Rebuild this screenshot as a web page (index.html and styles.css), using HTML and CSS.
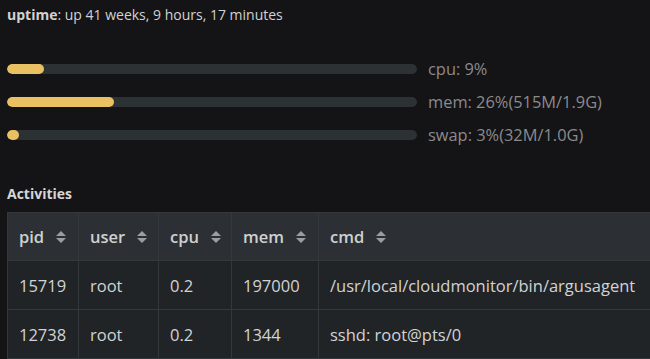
FILE: index.html
```html
<!DOCTYPE html>
<html>
<head>
<meta charset="utf-8">
<link rel="stylesheet" href="styles.css">
</head>
<body>
<div class="page">
  <div class="uptime"><b>uptime</b>: up 41 weeks, 9 hours, 17 minutes</div>
  <div class="stats">
    <div class="stat">
      <div class="track"><div class="fill" style="width:9%"></div></div>
      <span class="label">cpu: 9%</span>
    </div>
    <div class="stat">
      <div class="track"><div class="fill" style="width:26%"></div></div>
      <span class="label">mem: 26%(515M/1.9G)</span>
    </div>
    <div class="stat">
      <div class="track"><div class="fill" style="width:3%"></div></div>
      <span class="label">swap: 3%(32M/1.0G)</span>
    </div>
  </div>
  <div class="section-title">Activities</div>
  <table class="procs">
    <colgroup>
      <col class="c-pid"><col class="c-user"><col class="c-cpu"><col class="c-mem"><col class="c-cmd">
    </colgroup>
    <thead>
      <tr>
        <th><span class="th">pid<span class="sort"><i class="up"></i><i class="down"></i></span></span></th>
        <th><span class="th">user<span class="sort"><i class="up"></i><i class="down"></i></span></span></th>
        <th><span class="th">cpu<span class="sort"><i class="up"></i><i class="down"></i></span></span></th>
        <th><span class="th">mem<span class="sort"><i class="up"></i><i class="down"></i></span></span></th>
        <th><span class="th">cmd<span class="sort"><i class="up"></i><i class="down"></i></span></span></th>
      </tr>
    </thead>
    <tbody>
      <tr><td>15719</td><td>root</td><td>0.2</td><td>197000</td><td>/usr/local/cloudmonitor/bin/argusagent</td></tr>
      <tr><td>12738</td><td>root</td><td>0.2</td><td>1344</td><td>sshd: root@pts/0</td></tr>
      <tr class="blank"><td></td><td></td><td></td><td></td><td></td></tr>
    </tbody>
  </table>
</div>
</body>
</html>
```
FILE: styles.css
```css
html, body {
  margin: 0;
  padding: 0;
  background: #141316;
  overflow: hidden;
}
body {
  font-family: "Open Sans", "Noto Sans", sans-serif;
  color: #d4d4d4;
}
.page {
  padding: 6px 7px 0;
}
.uptime {
  font-size: 14px;
  line-height: 18px;
  color: #d2d2d2;
}
.uptime b {
  font-weight: 700;
}
.stats {
  margin-top: 28px;
  display: flex;
  flex-direction: column;
}
.stat {
  height: 33px;
  display: flex;
  align-items: center;
  gap: 11px;
}
.track {
  width: 410px;
  height: 10px;
  border-radius: 5px;
  background: #2c3134;
  overflow: hidden;
  flex: none;
}
.fill {
  height: 100%;
  min-width: 10px;
  border-radius: 5px;
  background: #e9c162;
}
.label {
  font-size: 16.4px;
  color: #8a8b8d;
  white-space: nowrap;
}
.section-title {
  margin-top: 34px;
  font-size: 14px;
  line-height: 18px;
  font-weight: 700;
  color: #d6d6d6;
}
.procs {
  margin-top: 9px;
  border-collapse: collapse;
  width: 644px;
  table-layout: fixed;
  font-size: 16.5px;
}
.c-pid { width: 71px; }
.c-user { width: 80px; }
.c-cpu { width: 73px; }
.c-mem { width: 87px; }
.procs th, .procs td {
  text-align: left;
  padding: 0 11px;
  border: 1px solid #33383c;
  white-space: nowrap;
}
.procs th {
  height: 47px;
  background: #2c3034;
  font-weight: 600;
  color: #cfd0d1;
}
.procs td {
  height: 48px;
  background: #212427;
  color: #d2d3d4;
}
.th {
  display: inline-flex;
  align-items: center;
  gap: 12px;
}
.sort {
  display: inline-flex;
  flex-direction: column;
  gap: 2px;
}
.sort i {
  display: block;
  width: 0;
  height: 0;
  border-left: 5px solid transparent;
  border-right: 5px solid transparent;
}
.sort .up { border-bottom: 5px solid #9b9d9f; }
.sort .down { border-top: 5px solid #9b9d9f; }
```
